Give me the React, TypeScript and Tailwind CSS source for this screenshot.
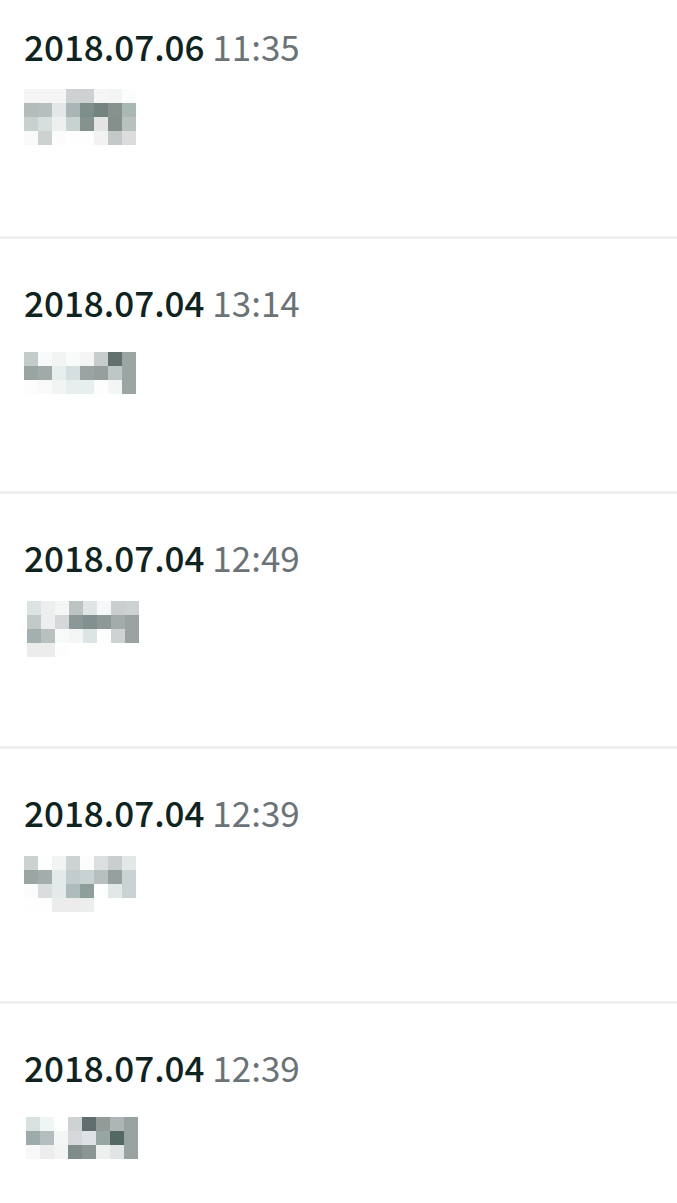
import React from 'react';

type Entry = {
    date: string;
    time: string;
    gap: string;
    shift: string;
    cells: string[][];
};

const entries: Entry[] = [
    {
        date: '2018.07.06',
        time: '11:35',
        gap: 'mt-[23px]',
        shift: 'ml-0',
        cells: [
            ['#f5f5f5', '#f5f5f5', '#f5f5f5', '#cdd1d1', '#cdd1d1', '#f5f5f5', '#f3f4f4', '#fbfcfc'],
            ['#b3bcbb', '#b6bfbd', '#e3e7e7', '#aab6b5', '#7e8e8a', '#748280', '#87928f', '#aab8b5'],
            ['#c9d1d0', '#d8dddd', '#eef0f0', '#c7d2d1', '#84918d', '#e4e4e4', '#858f8c', '#b9c1c0'],
            ['#fafafa', '#cdd1d0', '#fcfcfc', '#fefefe', '#fefefe', '#f2f2f2', '#c4c8c8', '#dcdcdd'],
        ],
    },
    {
        date: '2018.07.04',
        time: '13:14',
        gap: 'mt-[30px]',
        shift: 'ml-0',
        cells: [
            ['#c4cccb', '#f7f9fa', '#f2f4f4', '#f9fbfb', '#f5f5f5', '#c9cccc', '#62716d', '#9aa5a4'],
            ['#98a5a3', '#a1aaa8', '#e8eded', '#d5dfdf', '#9ba4a2', '#979f9e', '#bfc7c6', '#9aa5a4'],
            ['#fdfdfd', '#f9f9f9', '#f2f4f4', '#e6eeee', '#e6eeee', '#fdfdfd', '#f4f5f5', '#9aa5a4'],
        ],
    },
    {
        date: '2018.07.04',
        time: '12:49',
        gap: 'mt-[24px]',
        shift: 'ml-[3px]',
        cells: [
            ['#dde2e3', '#eceef0', '#f4f5f5', '#bcc3c2', '#dfe4e4', '#f5f8f8', '#c9cfcf', '#cdd1d1'],
            ['#c2c9c9', '#eceef0', '#d4d8d9', '#8a9997', '#80918f', '#8d9997', '#a4acab', '#9aa3a1'],
            ['#a4b0b0', '#b9c1c0', '#f8f9f9', '#f4f5f5', '#dde4e6', '#fdfefe', '#cfd2d3', '#9aa3a1'],
            ['#ececec', '#ececec', '#fdfdfd', '#ffffff', '#ffffff', '#ffffff', '#ffffff', '#ffffff'],
        ],
    },
    {
        date: '2018.07.04',
        time: '12:39',
        gap: 'mt-[24px]',
        shift: 'ml-0',
        cells: [
            ['#cdd2d1', '#fefefe', '#f2f4f4', '#ccd3d3', '#fdfdfe', '#dbdfe0', '#c9cfcf', '#e2e7e7'],
            ['#9aa6a3', '#a3adad', '#e4e9ea', '#c3cccc', '#c8d2d2', '#b8c0bf', '#96a19f', '#cad3d3'],
            ['#fbfcfd', '#dadddd', '#e4e9ea', '#aebcbc', '#8e9e9b', '#fefefe', '#e2e7e7', '#cad3d3'],
            ['#fefefe', '#fefefe', '#ececec', '#ececec', '#eceded', '#ffffff', '#ffffff', '#ffffff'],
        ],
    },
    {
        date: '2018.07.04',
        time: '12:39',
        gap: 'mt-[30px]',
        shift: 'ml-[2px]',
        cells: [
            ['#d8e0e0', '#eff4f4', '#fefefe', '#ced2d3', '#5f6e6c', '#939b99', '#adb5b6', '#98a3a1'],
            ['#9eabab', '#b3bdbd', '#f4f6f6', '#d5d9db', '#dee2e4', '#98a6a3', '#536765', '#98a3a1'],
            ['#f8f8f8', '#ededef', '#f2f4f4', '#7f8d8a', '#8b9593', '#eef0f0', '#e0e4e4', '#98a3a1'],
        ],
    },
];

const Mosaic: React.FC<{ cells: string[][] }> = ({ cells }) => (
    <div className="grid grid-cols-[repeat(8,14px)] auto-rows-[14px] w-max">
        {cells.flat().map((c, i) => (
            <div key={i} style={{ backgroundColor: c }} />
        ))}
    </div>
);

export default function App() {
    return (
        <div className="bg-white min-h-[1203px] w-full font-['Noto_Sans_CJK_SC','Noto_Sans',sans-serif] overflow-hidden">
            {entries.map((e, idx) => (
                <div
                    key={idx}
                    className={`px-6 border-b-[3px] border-[#eff0f0] ${idx === 0 ? 'pt-[26px] h-[239px]' : 'pt-[43px] h-[255px]'}`}
                >
                    <div className="text-[35px] leading-[40px] whitespace-nowrap">
                        <span className="font-medium text-[#0f2420]">{e.date}</span>{' '}
                        <span className="text-[#6b7377]">{e.time}</span>
                    </div>
                    <div className={`${e.gap} ${e.shift}`}>
                        <Mosaic cells={e.cells} />
                    </div>
                </div>
            ))}
        </div>
    );
}
